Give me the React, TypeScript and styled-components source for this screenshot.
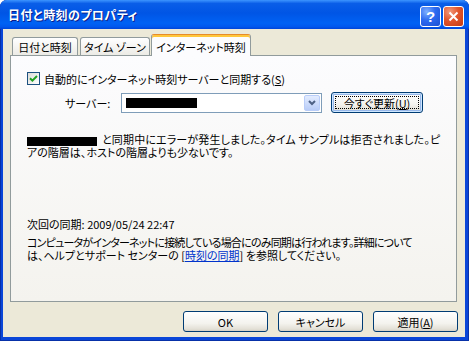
import styled, { createGlobalStyle } from "styled-components";

const GlobalStyle = createGlobalStyle`
  html, body {
    margin: 0;
    padding: 0;
    background: #ffffff;
  }
  body {
    font-family: "Noto Sans CJK JP", "Noto Sans", sans-serif;
    font-size: 11px;
    color: #000000;
    font-feature-settings: "palt" 1;
  }
`;

const Window = styled.div`
  width: 469px;
  height: 341px;
  display: flex;
  flex-direction: column;
  background: #0a46d8;
  border-radius: 7px 7px 0 0;
  box-shadow: inset 1px 0 0 #0831a8, inset -1px 0 0 #0831a8, inset 0 -1px 0 #0831a8;
  overflow: hidden;
`;

const TitleBar = styled.div`
  height: 29px;
  flex: none;
  display: flex;
  align-items: center;
  padding: 0 5px 0 8px;
  background: linear-gradient(
    to bottom,
    #3d95ff 0%,
    #0a5ee8 12%,
    #0055e5 45%,
    #0062f4 80%,
    #0058ee 92%,
    #0045d8 100%
  );
`;

const TitleText = styled.div`
  flex: 1;
  color: #ffffff;
  font-weight: bold;
  font-size: 12px;
  letter-spacing: 0.4px;
  text-shadow: 1px 1px 0 #0a1e8a;
`;

const CaptionButtons = styled.div`
  display: flex;
  gap: 2px;
  margin-top: 4px;
`;

const CaptionButton = styled.div<{ $kind: "help" | "close" }>`
  width: 21px;
  height: 21px;
  box-sizing: border-box;
  border: 1px solid #ffffff;
  border-radius: 3px;
  display: grid;
  place-items: center;
  color: #ffffff;
  font-family: "Liberation Sans", Arial, sans-serif;
  font-weight: bold;
  font-size: 15px;
  background: ${(p) =>
    p.$kind === "close"
      ? "radial-gradient(circle at 30% 25%, #f29a7c 0%, #e2552c 45%, #c33a12 100%)"
      : "radial-gradient(circle at 30% 25%, #7fb0ff 0%, #2c6af0 45%, #1b4fd3 100%)"};
`;

const Client = styled.div`
  flex: 1;
  margin: 0 4px 4px 3px;
  background: #ece9d8;
  display: flex;
  flex-direction: column;
  padding: 5px 7px 0 7px;
`;

const TabStrip = styled.div`
  height: 22px;
  display: flex;
  align-items: flex-end;
  gap: 2px;
  padding-left: 2px;
  margin-bottom: -1px;
  position: relative;
  z-index: 1;
`;

const Tab = styled.div<{ $active?: boolean; $w: number }>`
  width: ${(p) => p.$w}px;
  box-sizing: border-box;
  height: ${(p) => (p.$active ? 22 : 18)}px;
  margin-bottom: ${(p) => (p.$active ? 0 : 1)}px;
  margin-left: ${(p) => (p.$active ? -1 : 0)}px;
  border: 1px solid #919b9c;
  border-bottom: none;
  border-top-color: ${(p) => (p.$active ? "#e68b2c" : "#919b9c")};
  border-radius: 3px 3px 0 0;
  background: ${(p) =>
    p.$active ? "#fcfcfe" : "linear-gradient(to bottom, #ffffff, #ecebe6)"};
  box-shadow: ${(p) => (p.$active ? "inset 0 2px 0 #ffc73c" : "none")};
  display: flex;
  align-items: center;
  justify-content: center;
  padding-top: ${(p) => (p.$active ? 2 : 0)}px;
  white-space: nowrap;
`;

const Panel = styled.div`
  height: 247px;
  box-sizing: border-box;
  margin-right: 1px;
  border: 1px solid #919b9c;
  background: linear-gradient(to bottom, #fcfcfe, #f4f3ee);
  display: flex;
  flex-direction: column;
  padding: 16px 0 0 16px;
  overflow: hidden;
`;

const CheckRow = styled.div`
  height: 13px;
  display: flex;
  align-items: center;
  gap: 4px;
  white-space: nowrap;
`;

const CheckBox = styled.div`
  width: 13px;
  height: 13px;
  box-sizing: border-box;
  border: 1px solid #1c5180;
  background: linear-gradient(135deg, #dcdcd7, #ffffff);
  display: grid;
  place-items: center;
`;

const ServerRow = styled.div`
  margin-top: 7px;
  height: 21px;
  display: flex;
  align-items: center;
`;

const FieldLabel = styled.div`
  width: 56px;
  margin-left: 38px;
  white-space: nowrap;
`;

const Combo = styled.div`
  width: 201px;
  height: 20px;
  box-sizing: border-box;
  border: 1px solid #7f9db9;
  background: #ffffff;
  display: flex;
  align-items: center;
  padding: 0 1px 0 4px;
`;

const Redacted = styled.span<{ $w: number; $h: number }>`
  display: inline-block;
  width: ${(p) => p.$w}px;
  height: ${(p) => p.$h}px;
  background: #000000;
  vertical-align: middle;
  margin-right: 5px;
`;

const DropButton = styled.div`
  margin-left: auto;
  width: 16px;
  height: 16px;
  box-sizing: border-box;
  border: 1px solid #b9cdf9;
  border-radius: 2px;
  background: linear-gradient(to bottom, #e3ecff, #b8ccf8);
  display: grid;
  place-items: center;
`;

const PushButton = styled.div<{ $w: number; $focused?: boolean }>`
  width: ${(p) => p.$w}px;
  height: 21px;
  box-sizing: border-box;
  border: 1px solid #003c74;
  border-radius: 3px;
  background: linear-gradient(to bottom, #ffffff 0%, #f4f3ee 60%, #e3e0d6 90%, #d6d0c5 100%);
  box-shadow: ${(p) =>
    p.$focused ? "inset 0 0 0 1px #cee7ff, inset 0 0 0 2px #98b8ea" : "none"};
  display: flex;
  align-items: center;
  justify-content: center;
  white-space: nowrap;
  position: relative;
`;

const FocusRing = styled.div`
  position: absolute;
  inset: 3px;
  border: 1px dotted #000000;
`;

const UpdateButton = styled(PushButton)`
  margin-left: 9px;
`;

const Paragraph = styled.div<{ $top: number }>`
  margin-top: ${(p) => p.$top}px;
  display: flex;
  flex-direction: column;
`;

const Line = styled.div<{ $ls?: number }>`
  height: 13px;
  line-height: 13px;
  white-space: nowrap;
  letter-spacing: ${(p) => p.$ls ?? 0}px;
`;

const Link = styled.span`
  color: #0033cc;
  text-decoration: underline;
`;

const ButtonRow = styled.div`
  margin-top: 9px;
  display: flex;
  justify-content: flex-end;
  gap: 10px;
`;

const App = () => {
  return (
    <>
      <GlobalStyle />
      <Window>
        <TitleBar>
          <TitleText>日付と時刻のプロパティ</TitleText>
          <CaptionButtons>
            <CaptionButton $kind="help">?</CaptionButton>
            <CaptionButton $kind="close">
              <svg width="11" height="11" viewBox="0 0 11 11">
                <path d="M1.5 1.5 L9.5 9.5 M9.5 1.5 L1.5 9.5" stroke="#fff" strokeWidth="2" />
              </svg>
            </CaptionButton>
          </CaptionButtons>
        </TitleBar>
        <Client>
          <TabStrip>
            <Tab $w={66}>日付と時刻</Tab>
            <Tab $w={70}>タイム ゾーン</Tab>
            <Tab $w={100} $active>
              インターネット時刻
            </Tab>
          </TabStrip>
          <Panel>
            <CheckRow>
              <CheckBox>
                <svg width="9" height="9" viewBox="0 0 9 9">
                  <path d="M1 4.2 L3.4 6.6 L8 2" stroke="#21a121" strokeWidth="2" fill="none" />
                </svg>
              </CheckBox>
              <span>
                自動的にインターネット時刻サーバーと同期する(<u>S</u>)
              </span>
            </CheckRow>
            <ServerRow>
              <FieldLabel>サーバー:</FieldLabel>
              <Combo>
                <Redacted $w={71} $h={10} />
                <DropButton>
                  <svg width="8" height="6" viewBox="0 0 8 6">
                    <path d="M1 1 L4 4 L7 1" stroke="#4d6185" strokeWidth="2" fill="none" />
                  </svg>
                </DropButton>
              </Combo>
              <UpdateButton $w={92} $focused>
                <FocusRing />
                今すぐ更新(<u>U</u>)
              </UpdateButton>
            </ServerRow>
            <Paragraph $top={20}>
              <Line $ls={0.15}>
                <Redacted $w={70} $h={9} />
                と同期中にエラーが発生しました。タイム サンプルは拒否されました。ピ
              </Line>
              <Line>アの階層は、ホストの階層よりも少ないです。</Line>
            </Paragraph>
            <Paragraph $top={59}>
              <Line>次回の同期: 2009/05/24 22:47</Line>
            </Paragraph>
            <Paragraph $top={5}>
              <Line $ls={-0.8}>
                コンピュータがインターネットに接続している場合にのみ同期は行われます。詳細について
              </Line>
              <Line>
                は、ヘルプとサポート センターの [<Link>時刻の同期</Link>] を参照してください。
              </Line>
            </Paragraph>
          </Panel>
          <ButtonRow>
            <PushButton $w={85}>OK</PushButton>
            <PushButton $w={85}>キャンセル</PushButton>
            <PushButton $w={85}>
              適用(<u>A</u>)
            </PushButton>
          </ButtonRow>
        </Client>
      </Window>
    </>
  );
};

export default App;
